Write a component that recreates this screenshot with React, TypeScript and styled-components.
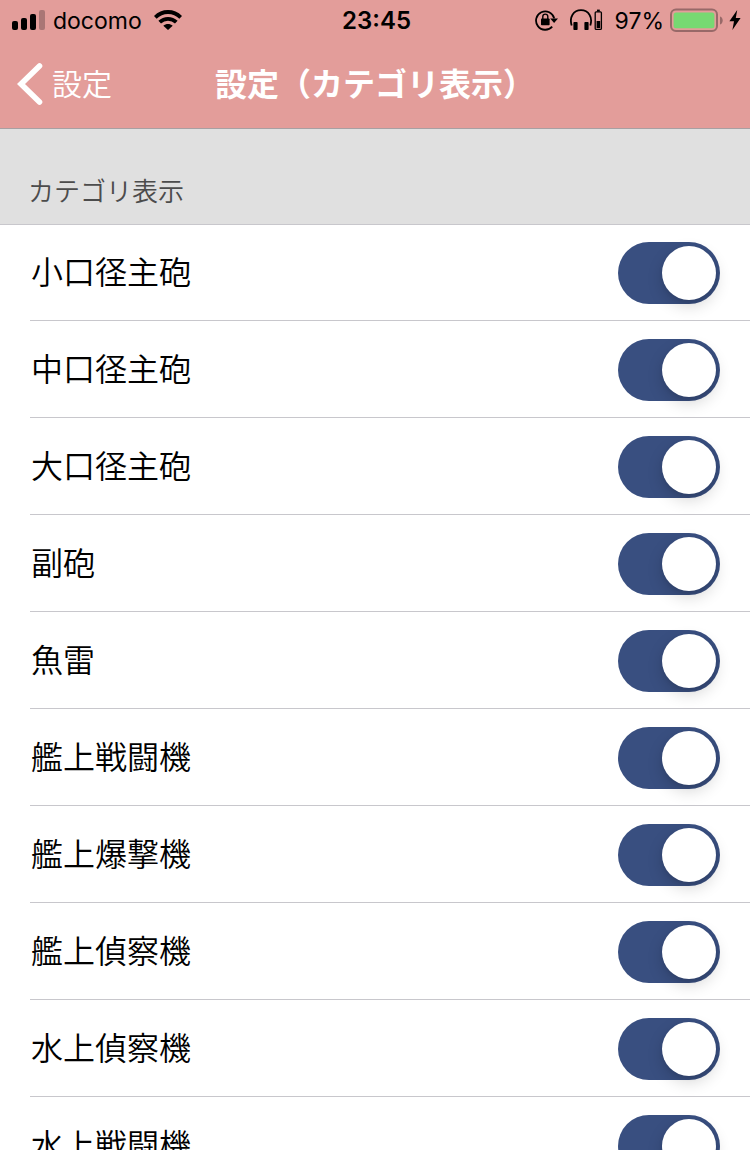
import { useState } from "react";
import styled, { createGlobalStyle } from "styled-components";

const GlobalStyle = createGlobalStyle`
  *, *::before, *::after { box-sizing: border-box; }
  html, body { margin: 0; background: #ffffff; }
  body { font-family: Inter, "Noto Sans CJK JP", sans-serif; color: #000000; }
`;

const Screen = styled.div`
  display: flex;
  flex-direction: column;
  height: 100vh;
  margin-right: 2px;
  overflow: hidden;
`;

const Header = styled.header`
  flex: none;
  background: #e39d9a;
  border-bottom: 1px solid #a8a0a2;
`;

const StatusBar = styled.div`
  display: grid;
  grid-template-columns: 1fr auto 1fr;
  align-items: center;
  height: 40px;
  padding: 0 9px 0 12px;
`;

const StatusGroup = styled.div<{ $end?: boolean; $gap: number }>`
  display: flex;
  align-items: center;
  justify-content: ${(p) => (p.$end ? "flex-end" : "flex-start")};
  gap: ${(p) => p.$gap}px;
  white-space: nowrap;

  svg { display: block; flex: none; }
`;

const StatusText = styled.span`
  padding-top: 2px;
  font-size: 23px;
  line-height: 38px;
`;

const Clock = styled.time`
  padding-top: 2px;
  font-size: 24px;
  font-weight: 600;
  line-height: 38px;
`;

const NavBar = styled.nav`
  display: grid;
  grid-template-columns: 1fr auto 1fr;
  align-items: center;
  height: 88px;
  padding: 0 17px;
`;

const BackLink = styled.a`
  display: flex;
  align-items: center;
  gap: 8px;
  color: #ffffff;
  font-size: 30px;
  font-weight: 350;
  line-height: 44px;
  text-decoration: none;
`;

const Title = styled.h1`
  margin: 0;
  padding-top: 2px;
  color: #ffffff;
  font-size: 32px;
  font-weight: 700;
  line-height: 44px;
  white-space: nowrap;
`;

const SectionTitle = styled.h2`
  flex: none;
  height: 95px;
  margin: 0;
  padding: 43px 30px 0 28px;
  background: #e0e0e0;
  color: #4c4c4c;
  font-size: 26px;
  font-weight: 350;
  line-height: 40px;
`;

const List = styled.ul`
  flex: 1;
  min-height: 0;
  margin: 0;
  padding: 0;
  list-style: none;
  overflow-y: auto;
  scrollbar-width: none;
  box-shadow: inset 0 1px 0 #c8c7cc;
`;

const Row = styled.li`
  margin-left: 30px;
  border-bottom: 1px solid #c8c7cc;
`;

const RowLabel = styled.label`
  display: flex;
  align-items: center;
  justify-content: space-between;
  height: 96px;
  padding: 2px 30px 0 1px;
  font-size: 32px;
  font-weight: 350;
  line-height: 48px;
`;

const Switch = styled.input`
  appearance: none;
  flex: none;
  width: 102px;
  height: 62px;
  margin: 0;
  padding: 4px;
  border-radius: 31px;
  background: #d8d8dc;

  &:checked { background: #394f80; }

  &::before {
    content: "";
    display: block;
    width: 54px;
    height: 54px;
    border-radius: 50%;
    background: #ffffff;
    box-shadow: 0 6px 16px rgba(0, 0, 0, 0.16), 0 2px 4px rgba(0, 0, 0, 0.08);
  }

  &:checked::before { margin-left: 40px; }
`;

const SignalIcon = () => (
  <svg width="33" height="20" viewBox="0 0 33 20" aria-hidden="true">
    <rect x="0" y="11" width="6" height="9" rx="2" />
    <rect x="9" y="8" width="6" height="12" rx="2" />
    <rect x="18" y="4" width="6" height="16" rx="2" />
    <rect x="27" y="0" width="6" height="20" rx="2" fill="#aa7675" />
  </svg>
);

const WifiIcon = () => (
  <svg width="28" height="20" viewBox="0 0 28 20" aria-hidden="true">
    <g fill="none" stroke="#000" strokeWidth="3.8">
      <path d="M1.3 7.4C8.4 0.2 19.6 0.2 26.7 7.4" />
      <path d="M5.7 12.2C10.4 7.7 17.6 7.7 22.3 12.2" />
    </g>
    <path d="M9.3 15.7C12 13.3 16 13.3 18.7 15.7L14 20Z" />
  </svg>
);

const RotationLockIcon = () => (
  <svg width="23" height="22" viewBox="0 0 23 22" aria-hidden="true">
    <path d="M17.2 17.6A9.2 9.2 0 1 1 19.2 9.4" fill="none" stroke="#000" strokeWidth="1.8" />
    <path d="M15.2 9.4H23L19.1 14Z" />
    <rect x="6" y="9.5" width="8.6" height="6.8" rx="0.8" />
    <path d="M7.8 10V7.6a2.5 2.5 0 0 1 5 0V10" fill="none" stroke="#000" strokeWidth="1.4" />
  </svg>
);

const HeadphonesIcon = () => (
  <svg width="33" height="22" viewBox="0 0 33 22" aria-hidden="true">
    <path d="M1.7 16.5C-1 8 3.5 1.2 11 1.2S23 8 20.3 16.5" fill="none" stroke="#000" strokeWidth="1.8" />
    <rect x="3.4" y="13" width="4.2" height="8" rx="0.8" />
    <rect x="14.4" y="13" width="4.2" height="8" rx="0.8" />
    <rect x="25.2" y="2.8" width="6.2" height="17.6" rx="1" fill="none" stroke="#000" strokeWidth="1.3" />
    <rect x="27" y="0.6" width="2.8" height="2" />
    <rect x="26.6" y="12" width="3.6" height="7" />
  </svg>
);

const BatteryIcon = () => (
  <svg width="53" height="24" viewBox="0 0 53 24" aria-hidden="true">
    <rect x="1" y="1.6" width="46" height="21.4" rx="5" fill="none" stroke="#986968" strokeWidth="2" />
    <rect x="3.6" y="4.4" width="40.8" height="15.8" rx="2.5" fill="#77d972" />
    <path d="M50 8.4C53.6 9.4 53.6 15.4 50 16.4Z" fill="#986968" />
  </svg>
);

const BoltIcon = () => (
  <svg width="12" height="20" viewBox="0 0 12 20" aria-hidden="true">
    <path d="M8.2 0L0.4 11.2H5L3.4 20L11.6 8H6.8Z" />
  </svg>
);

const ChevronIcon = () => (
  <svg width="27" height="44" viewBox="0 0 27 44" aria-hidden="true">
    <path d="M22.5 4L4 22L22.5 40" fill="none" stroke="#fff" strokeWidth="5.6" strokeLinecap="round" strokeLinejoin="miter" />
  </svg>
);

const categories = [
  "小口径主砲",
  "中口径主砲",
  "大口径主砲",
  "副砲",
  "魚雷",
  "艦上戦闘機",
  "艦上爆撃機",
  "艦上偵察機",
  "水上偵察機",
  "水上戦闘機",
];

function CategoryRow({ name }: { name: string }) {
  const [visible, setVisible] = useState(true);
  return (
    <Row>
      <RowLabel>
        {name}
        <Switch type="checkbox" role="switch" checked={visible} onChange={(e) => setVisible(e.target.checked)} />
      </RowLabel>
    </Row>
  );
}

export default function App() {
  return (
    <Screen>
      <GlobalStyle />
      <Header>
        <StatusBar>
          <StatusGroup $gap={12}>
            <StatusGroup $gap={8}>
              <SignalIcon />
              <StatusText>docomo</StatusText>
            </StatusGroup>
            <WifiIcon />
          </StatusGroup>
          <Clock>23:45</Clock>
          <StatusGroup $end $gap={12}>
            <RotationLockIcon />
            <HeadphonesIcon />
            <StatusGroup $gap={6}>
              <StatusText>97%</StatusText>
              <BatteryIcon />
              <BoltIcon />
            </StatusGroup>
          </StatusGroup>
        </StatusBar>
        <NavBar>
          <BackLink href="#settings">
            <ChevronIcon />
            設定
          </BackLink>
          <Title>設定（カテゴリ表示）</Title>
        </NavBar>
      </Header>
      <SectionTitle>カテゴリ表示</SectionTitle>
      <List>
        {categories.map((name) => (
          <CategoryRow key={name} name={name} />
        ))}
      </List>
    </Screen>
  );
}
